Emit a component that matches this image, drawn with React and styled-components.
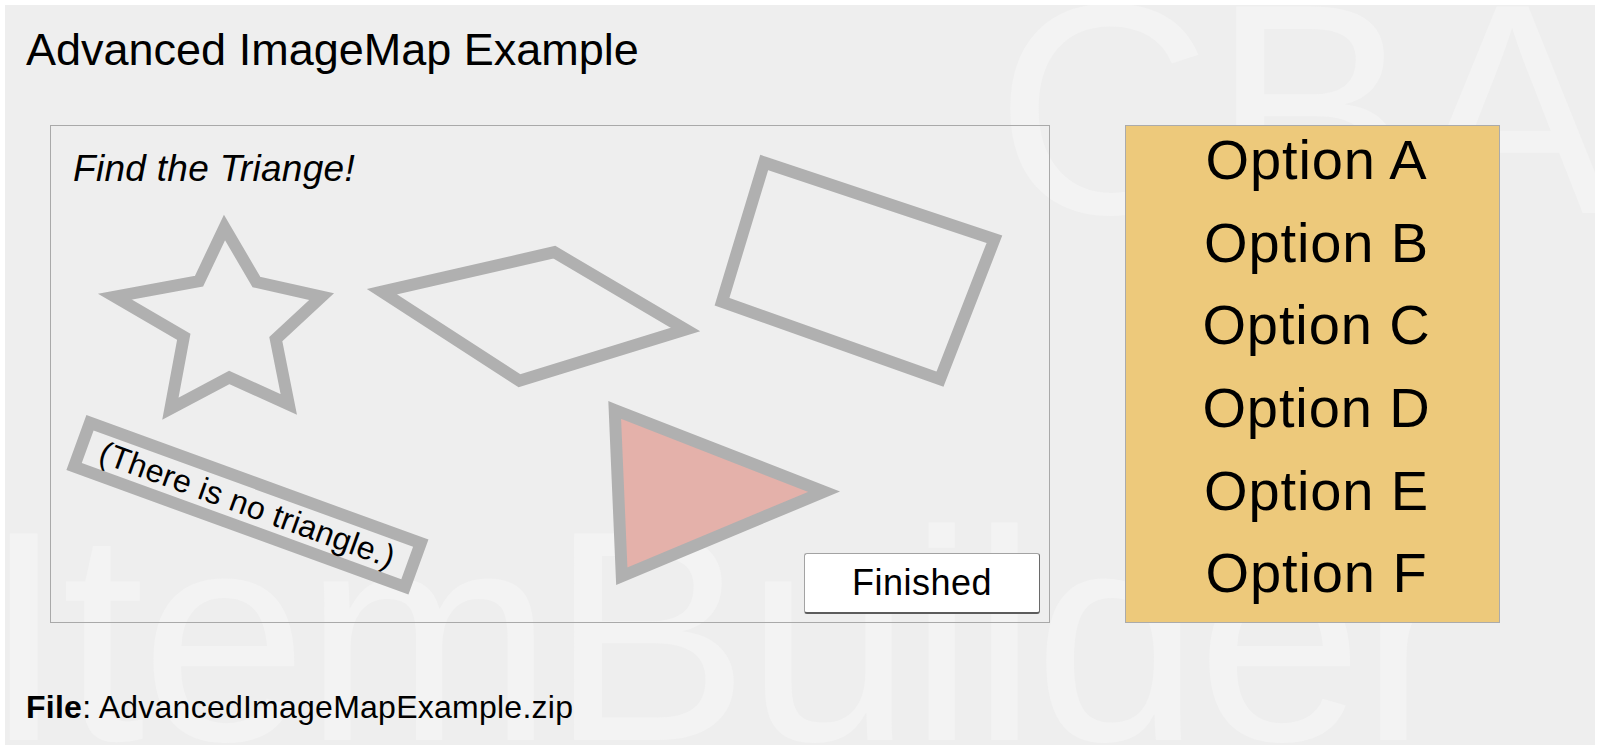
import React from "react";
import styled, { createGlobalStyle } from "styled-components";

const GlobalStyle = createGlobalStyle`
  html, body {
    margin: 0;
    padding: 0;
    background: #ffffff;
  }
  body {
    font-family: "Liberation Sans", Arial, Helvetica, sans-serif;
    color: #000;
  }
`;

const Stage = styled.div`
  position: relative;
  box-sizing: border-box;
  width: 1590px;
  height: 740px;
  margin: 5px;
  padding: 19px 21px 0;
  background: #eeeeee;
  overflow: hidden;
`;

const Watermark = styled.span`
  position: absolute;
  top: ${(p) => p.$top}px;
  left: ${(p) => p.$left}px;
  font-family: "Liberation Sans", Arial, sans-serif;
  font-size: 300px;
  line-height: 300px;
  letter-spacing: ${(p) => p.$spacing || 0}px;
  color: #f3f3f3;
  white-space: nowrap;
  pointer-events: none;
  user-select: none;
  z-index: 0;
`;

const Title = styled.h1`
  position: relative;
  z-index: 1;
  margin: 0;
  font-size: 45px;
  line-height: 52px;
  font-weight: normal;
`;

const Row = styled.div`
  position: relative;
  z-index: 1;
  display: flex;
  align-items: flex-start;
  gap: 75px;
  margin-top: 49px;
  padding-left: 24px;
`;

const MapBox = styled.div`
  position: relative;
  box-sizing: border-box;
  width: 1000px;
  height: 498px;
  border: 1px solid #a9a9a9;
`;

const MapCanvas = styled.svg`
  position: absolute;
  inset: 0;
  width: 100%;
  height: 100%;
  overflow: visible;
`;

const Caption = styled.div`
  position: relative;
  padding: 22px 0 0 22px;
  font-size: 37px;
  line-height: 41px;
  letter-spacing: 0.3px;
  font-style: italic;
`;

const FinishButton = styled.button`
  position: absolute;
  right: 9px;
  bottom: 8px;
  box-sizing: border-box;
  width: 236px;
  height: 61px;
  padding: 0;
  background: #ffffff;
  border: 1px solid #a3a3a3;
  border-right-color: #6a6a6a;
  border-bottom: 2px solid #5c5c5c;
  border-radius: 3px;
  font-family: "Liberation Sans", Arial, sans-serif;
  font-size: 36px;
  letter-spacing: 0.5px;
  color: #000;
  cursor: pointer;
`;

const OptionList = styled.div`
  box-sizing: border-box;
  width: 375px;
  height: 498px;
  border: 1px solid #ababab;
  background: #edc97b;
  display: grid;
  grid-template-rows: repeat(6, 1fr);
`;

const OptionItem = styled.div`
  padding-left: 8px;
  font-size: 56px;
  line-height: 68px;
  letter-spacing: 0.9px;
  text-align: center;
`;

const Footer = styled.p`
  position: relative;
  z-index: 1;
  margin: 66px 0 0;
  font-size: 32px;
  line-height: 37px;
  letter-spacing: 0.25px;
`;

const SHAPE_STROKE = "#b0b0b0";

const shapes = [
  {
    id: "star",
    points:
      "173.5,101.5 205.4,156 270.6,170.7 224.8,213.2 237.8,278.5 178.3,251.5 119.4,282.7 132.8,210.7 64,170.7 148,155.2",
    fill: "none",
  },
  {
    id: "rhombus",
    points: "331,165.7 503.3,126.2 634.5,203.5 468.5,254.8",
    fill: "none",
  },
  {
    id: "rect",
    points: "713.2,36.5 943.4,113.3 889,253.2 671,175.7",
    fill: "none",
  },
  {
    id: "triangle",
    points: "563.7,284 773,365.7 570.8,450.2",
    fill: "#e4b1aa",
  },
];

const options = ["A", "B", "C", "D", "E", "F"];

export default function App() {
  return (
    <>
      <GlobalStyle />
      <Stage>
        <Watermark $top={-46} $left={990} aria-hidden="true">
          CBA
        </Watermark>
        <Watermark $top={481} $left={-23} $spacing={-4} aria-hidden="true">
          ItemBuilder
        </Watermark>

        <Title>Advanced ImageMap Example</Title>

        <Row>
          <MapBox>
            <MapCanvas viewBox="0 0 998 496">
              {shapes.map((s) => (
                <polygon
                  key={s.id}
                  points={s.points}
                  fill={s.fill}
                  stroke={SHAPE_STROKE}
                  strokeWidth="12"
                  strokeLinejoin="miter"
                />
              ))}
              <g transform="translate(39 296.8) rotate(20)">
                <rect
                  x="0"
                  y="0"
                  width="352"
                  height="46.5"
                  fill="none"
                  stroke={SHAPE_STROKE}
                  strokeWidth="12"
                />
                <text
                  x="176"
                  y="34"
                  textAnchor="middle"
                  fontFamily="'Liberation Sans', Arial, sans-serif"
                  fontSize="32"
                  letterSpacing="0.35"
                  fill="#000"
                >
                  (There is no triangle.)
                </text>
              </g>
            </MapCanvas>
            <Caption>Find the Triange!</Caption>
            <FinishButton type="button">Finished</FinishButton>
          </MapBox>

          <OptionList>
            {options.map((o) => (
              <OptionItem key={o}>Option {o}</OptionItem>
            ))}
          </OptionList>
        </Row>

        <Footer>
          <b>File</b>: AdvancedImageMapExample.zip
        </Footer>
      </Stage>
    </>
  );
}
